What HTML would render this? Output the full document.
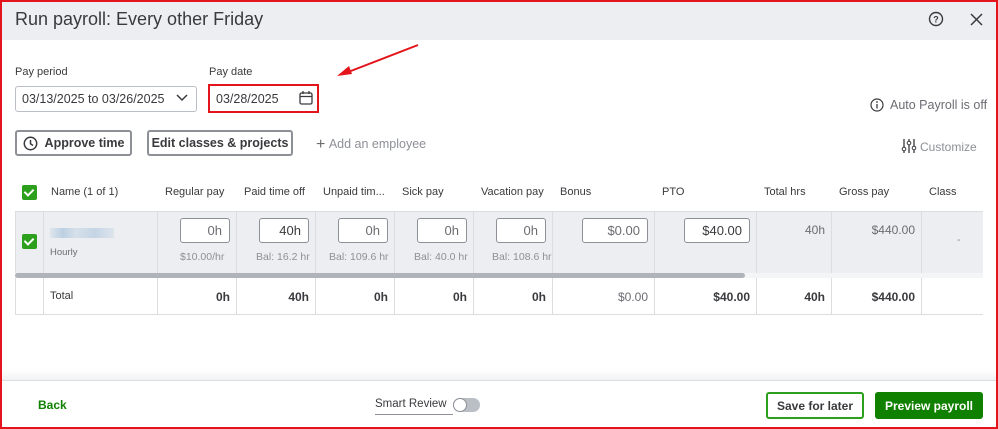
<!DOCTYPE html><html><head><style>
*{box-sizing:border-box;margin:0;padding:0}
body{width:998px;height:429px;position:relative;font-family:"Liberation Sans",Arial,sans-serif;background:#fff;overflow:hidden;color:#393a3d}
.a{position:absolute}
.hd{font-size:11px;color:#393a3d;top:186px}
.in{position:absolute;top:218px;height:25px;border:1px solid #8d9096;border-radius:3px;background:#fff;font-size:13px;text-align:right;padding:4px 7px;color:#6b6c72}
.sub{position:absolute;top:251px;font-size:10.5px;color:#8d9096}
.vl{position:absolute;width:1px;background:#dcdde0}
.tot{position:absolute;top:290px;font-size:12px;font-weight:bold;text-align:right}
.btn{position:absolute;border:2px solid #8d9096;border-radius:3px;font-weight:bold;font-size:12.5px;display:flex;align-items:center;justify-content:center;color:#393a3d}
.cb{position:absolute;width:15px;height:15px;background:#2ca01c;border-radius:2px}
.cb:after{content:"";position:absolute;left:4px;top:2px;width:4px;height:7px;border:solid #fff;border-width:0 2px 2px 0;transform:rotate(45deg)}
</style></head><body>
<div class="a" style="left:0;top:0;width:998px;height:40px;background:#eceef1"></div>
<div class="a" style="left:15px;top:9px;font-size:18px;color:#393a3d">Run payroll: Every other Friday</div>
<svg class="a" style="left:928px;top:11px" width="16" height="16"><circle cx="8" cy="8" r="6.5" fill="none" stroke="#393a3d" stroke-width="1.4"/><text x="8" y="11.5" font-size="9" text-anchor="middle" font-family="Liberation Sans" fill="#393a3d" font-weight="bold">?</text></svg>
<svg class="a" style="left:970px;top:13px" width="13" height="13"><path d="M1 1L12 12M12 1L1 12" stroke="#393a3d" stroke-width="1.5"/></svg>

<div class="a" style="left:15px;top:66px;font-size:11px;color:#393a3d">Pay period</div>
<div class="a" style="left:15px;top:86px;width:182px;height:26px;border:1px solid #babec5;border-radius:3px;font-size:12.5px;padding:5px 6px">03/13/2025 to 03/26/2025</div>
<svg class="a" style="left:176px;top:94px" width="12" height="8"><path d="M1 1L6 6L11 1" fill="none" stroke="#393a3d" stroke-width="1.5"/></svg>
<div class="a" style="left:209px;top:66px;font-size:11px">Pay date</div>
<div class="a" style="left:208px;top:84px;width:111px;height:29px;border:2px solid #e3141b"></div>
<div class="a" style="left:216px;top:92px;font-size:12.5px">03/28/2025</div>
<svg class="a" style="left:299px;top:91px" width="14" height="14"><rect x="1" y="2" width="12" height="11" rx="1.5" fill="none" stroke="#393a3d" stroke-width="1.3"/><path d="M1 5.5H13M4 0V3M10 0V3" stroke="#393a3d" stroke-width="1.3"/></svg>
<svg class="a" style="left:335px;top:43px" width="85" height="35"><path d="M83 2L8 31" stroke="#e3141b" stroke-width="2"/><path d="M2 33L14 23L17 31Z" fill="#e3141b"/></svg>

<svg class="a" style="left:870px;top:98px" width="14" height="14"><circle cx="7" cy="7" r="6" fill="none" stroke="#393a3d" stroke-width="1.2"/><path d="M7 6V10.5" stroke="#393a3d" stroke-width="1.3"/><circle cx="7" cy="4" r=".9" fill="#393a3d"/></svg>
<div class="a" style="left:890px;top:98px;font-size:12.5px;color:#6b6c72">Auto Payroll is off</div>

<div class="btn" style="left:15px;top:130px;width:117px;height:26px"><svg width="15" height="15" style="margin-right:7px"><circle cx="7.5" cy="7.5" r="6.2" fill="none" stroke="#393a3d" stroke-width="1.5"/><path d="M7.5 4V7.8L10 9.5" fill="none" stroke="#393a3d" stroke-width="1.5"/></svg>Approve time</div>
<div class="btn" style="left:147px;top:130px;width:146px;height:26px">Edit classes &amp; projects</div>
<div class="a" style="left:316px;top:135px;font-size:12.5px;color:#8d9096"><span style="font-size:16px;color:#6b6c72;position:relative;top:1px">+</span>&nbsp;Add an employee</div>
<svg class="a" style="left:901px;top:139px" width="16" height="14"><path d="M3 0V14M8 0V14M13 0V14" stroke="#393a3d" stroke-width="1.3"/><circle cx="3" cy="10" r="1.8" fill="#fff" stroke="#393a3d"/><circle cx="8" cy="4" r="1.8" fill="#fff" stroke="#393a3d"/><circle cx="13" cy="9" r="1.8" fill="#fff" stroke="#393a3d"/></svg>
<div class="a" style="left:920px;top:140px;font-size:12px;color:#8d9096">Customize</div>

<div class="cb" style="left:22px;top:185px"></div>
<div class="a hd" style="left:51px">Name (1 of 1)</div>
<div class="a hd" style="left:165px">Regular pay</div>
<div class="a hd" style="left:244px">Paid time off</div>
<div class="a hd" style="left:323px">Unpaid tim...</div>
<div class="a hd" style="left:402px">Sick pay</div>
<div class="a hd" style="left:481px">Vacation pay</div>
<div class="a hd" style="left:560px">Bonus</div>
<div class="a hd" style="left:662px">PTO</div>
<div class="a hd" style="left:764px">Total hrs</div>
<div class="a hd" style="left:839px">Gross pay</div>
<div class="a hd" style="left:929px">Class</div>

<div class="a" style="left:15px;top:211px;width:968px;height:63px;background:#eceef1;border-top:1px solid #dcdde0"></div>
<div class="a" style="left:15px;top:273px;width:968px;height:5px;background:#f4f5f7"></div>
<div class="a" style="left:15px;top:273px;width:730px;height:5px;background:#b0b4ba;border-radius:3px"></div>
<div class="a" style="left:15px;top:278px;width:968px;height:37px;border-bottom:1px solid #dcdde0"></div>

<div class="vl" style="left:15px;top:211px;height:62px"></div>
<div class="vl" style="left:43px;top:211px;height:62px"></div>
<div class="vl" style="left:157px;top:211px;height:62px"></div>
<div class="vl" style="left:236px;top:211px;height:62px"></div>
<div class="vl" style="left:315px;top:211px;height:62px"></div>
<div class="vl" style="left:394px;top:211px;height:62px"></div>
<div class="vl" style="left:473px;top:211px;height:62px"></div>
<div class="vl" style="left:552px;top:211px;height:62px"></div>
<div class="vl" style="left:654px;top:211px;height:62px"></div>
<div class="vl" style="left:756px;top:211px;height:62px"></div>
<div class="vl" style="left:831px;top:211px;height:62px"></div>
<div class="vl" style="left:921px;top:211px;height:62px"></div>

<div class="vl" style="left:15px;top:278px;height:37px"></div>
<div class="vl" style="left:43px;top:278px;height:37px"></div>
<div class="vl" style="left:157px;top:278px;height:37px"></div>
<div class="vl" style="left:236px;top:278px;height:37px"></div>
<div class="vl" style="left:315px;top:278px;height:37px"></div>
<div class="vl" style="left:394px;top:278px;height:37px"></div>
<div class="vl" style="left:473px;top:278px;height:37px"></div>
<div class="vl" style="left:552px;top:278px;height:37px"></div>
<div class="vl" style="left:654px;top:278px;height:37px"></div>
<div class="vl" style="left:756px;top:278px;height:37px"></div>
<div class="vl" style="left:831px;top:278px;height:37px"></div>
<div class="vl" style="left:921px;top:278px;height:37px"></div>

<div class="cb" style="left:22px;top:234px"></div>
<div class="a" style="left:50px;top:228px;width:64px;height:10px;background:linear-gradient(90deg,#dfe6ee,#bcd0e2 20%,#d5e0ea 40%,#c5d5e5 70%,#dde4ec)"></div>
<div class="a" style="left:50px;top:247px;font-size:9.5px;color:#6b6c72">Hourly</div>
<div class="in" style="left:180px;width:50px">0h</div>
<div class="in" style="left:259px;width:50px;color:#393a3d">40h</div>
<div class="in" style="left:338px;width:50px">0h</div>
<div class="in" style="left:417px;width:50px">0h</div>
<div class="in" style="left:496px;width:50px">0h</div>
<div class="in" style="left:582px;width:66px">$0.00</div>
<div class="in" style="left:684px;width:66px;color:#393a3d">$40.00</div>
<div class="sub" style="left:180px">$10.00/hr</div>
<div class="sub" style="left:256px">Bal: 16.2 hr</div>
<div class="sub" style="left:329px">Bal: 109.6 hr</div>
<div class="sub" style="left:414px">Bal: 40.0 hr</div>
<div class="sub" style="left:492px">Bal: 108.6 hr</div>
<div class="a" style="left:760px;top:223px;width:65px;text-align:right;font-size:12px;color:#6b6c72">40h</div>
<div class="a" style="left:835px;top:223px;width:80px;text-align:right;font-size:12px;color:#6b6c72">$440.00</div>
<div class="a" style="left:957px;top:234px;font-size:11px;color:#8d9096">-</div>

<div class="a" style="left:50px;top:290px;font-size:11px">Total</div>
<div class="tot" style="left:160px;width:70px">0h</div>
<div class="tot" style="left:239px;width:70px">40h</div>
<div class="tot" style="left:318px;width:70px">0h</div>
<div class="tot" style="left:397px;width:70px">0h</div>
<div class="tot" style="left:476px;width:70px">0h</div>
<div class="tot" style="left:560px;width:88px;font-weight:normal;color:#6b6c72">$0.00</div>
<div class="tot" style="left:660px;width:90px">$40.00</div>
<div class="tot" style="left:760px;width:65px">40h</div>
<div class="tot" style="left:835px;width:80px">$440.00</div>

<div class="a" style="left:0;top:370px;width:998px;height:11px;background:linear-gradient(#fff,#f1f2f4);border-bottom:1px solid #dcdde0"></div>
<div class="a" style="left:38px;top:398px;font-size:12px;font-weight:bold;color:#108000">Back</div>
<div class="a" style="left:375px;top:398px;font-size:11.5px;color:#393a3d;border-bottom:1px solid #8d9096;padding-bottom:4px;width:78px">Smart Review</div>
<div class="a" style="left:453px;top:398px;width:27px;height:14px;border-radius:7px;background:#babec5"></div>
<div class="a" style="left:453px;top:398px;width:14px;height:14px;border-radius:7px;background:#fff;border:1px solid #8d9096"></div>
<div class="a" style="left:766px;top:392px;width:98px;height:27px;border:2px solid #2ca01c;border-radius:3px;font-size:12px;font-weight:bold;display:flex;align-items:center;justify-content:center">Save for later</div>
<div class="a" style="left:875px;top:392px;width:108px;height:27px;background:#108000;border-radius:3px;color:#fff;font-size:12px;font-weight:bold;display:flex;align-items:center;justify-content:center">Preview payroll</div>

<div class="a" style="left:0;top:0;width:998px;height:429px;border:2px solid #e3141b"></div>
</body></html>
